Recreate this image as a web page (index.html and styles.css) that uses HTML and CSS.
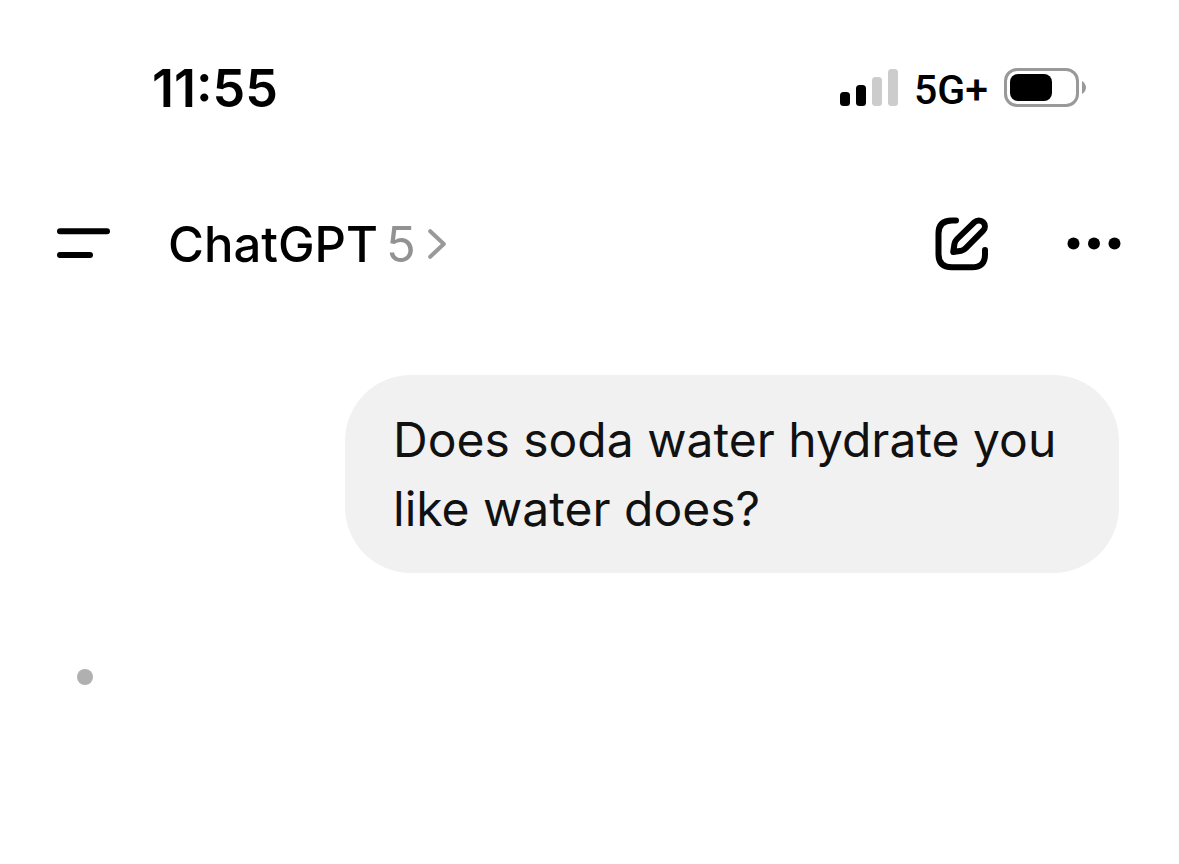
FILE: index.html
```html
<!DOCTYPE html>
<html lang="en">

<head>
    <meta charset="UTF-8">
    <meta name="viewport" content="width=device-width, initial-scale=1">
    <title>ChatGPT</title>
    <link rel="stylesheet" href="styles.css">
</head>

<body>
    <div class="status-bar">
        <span class="time">11:55</span>
        <div class="status-icons">
            <svg class="signal" width="58" height="40" viewBox="0 0 58 40" aria-hidden="true">
                <rect x="0" y="24" width="10" height="14" rx="3.5" />
                <rect x="16" y="17" width="10" height="21" rx="3.5" />
                <rect class="off" x="32" y="9" width="10" height="29" rx="3.5" />
                <rect class="off" x="48" y="1" width="10" height="37" rx="3.5" />
            </svg>
            <span class="network">5G+</span>
            <svg class="battery" width="83" height="40" viewBox="0 0 83 40" aria-hidden="true">
                <rect class="shell" x="1.5" y="1.5" width="72" height="36" rx="11.5" />
                <rect x="6" y="6" width="42" height="27" rx="8" />
                <path class="cap" d="M78 13C80.5 14.500 82 17 82 19.500S80.500 24.500 78 26Z" />
            </svg>
        </div>
    </div>

    <header class="header">
        <button class="icon-button" type="button" aria-label="Menu">
            <svg width="53" height="32" viewBox="0 0 53 32">
                <path class="line" d="M3 3.300H50M3 27H33" />
            </svg>
        </button>
        <button class="model" type="button">
            <span>ChatGPT</span>
            <span class="version">5</span>
            <svg width="18" height="30" viewBox="0 0 18 30" aria-hidden="true">
                <path class="chevron" d="M2.200 2.200L15.800 15L2.200 27.800" />
            </svg>
        </button>
        <div class="actions">
            <button class="icon-button" type="button" aria-label="New chat">
                <svg width="54" height="54" viewBox="0 0 54 54">
                    <path class="line" d="M21 3.500H17C8 3.500 3.500 7.700 3.500 16.500V37.200C3.500 46 8 50.200 17 50.200H37C45.800 50.200 50 46 50 37.200V33" />
                    <path class="line" d="M18.200 35L19.500 26.800C19.800 24.800 20.700 23.400 22.100 22L39.500 5.200C42 2.800 45.800 2.800 48.100 5.200C50.500 7.600 50.500 11.200 48.100 13.700L30.800 31.200C29.500 32.500 28.100 33.400 26.300 33.800Z" />
                </svg>
            </button>
            <button class="icon-button" type="button" aria-label="More">
                <svg width="54" height="14" viewBox="0 0 54 14">
                    <circle cx="6.500" cy="6.500" r="6" />
                    <circle cx="27" cy="6.500" r="6" />
                    <circle cx="47.500" cy="6.500" r="6" />
                </svg>
            </button>
        </div>
    </header>

    <main class="chat">
        <p class="bubble">Does soda water hydrate you like water does?</p>
        <div class="typing" role="status" aria-label="Typing"></div>
    </main>
</body>

</html>
```
FILE: styles.css
```css
* {
    box-sizing: border-box;
}

body {
    margin: 0;
    background-color: #fff;
    color: #000;
    font-family: Inter, "Liberation Sans", sans-serif;
    font-size: 48px;
}

svg {
    display: block;
}

button {
    display: flex;
    align-items: center;
    padding: 0;
    border: none;
    background: none;
    color: inherit;
    font: inherit;
    cursor: pointer;
}

.status-bar {
    display: flex;
    align-items: center;
    justify-content: space-between;
    height: 176px;
    padding: 0 92px 0 152px;
}

.time {
    font-size: 52px;
    font-weight: 600;
}

.status-icons {
    display: flex;
    align-items: center;
    gap: 16px;
}

.off {
    fill: #ccc;
}

.network {
    padding-top: 4px;
    font-family: Roboto, "Liberation Sans", sans-serif;
    font-size: 41px;
    font-weight: 500;
}

.shell {
    fill: none;
    stroke: #999;
    stroke-width: 3;
}

.cap {
    fill: #999;
}

.header {
    display: flex;
    align-items: center;
    height: 136px;
    padding: 0 58px 0 57px;
}

.line {
    fill: none;
    stroke: #000;
    stroke-width: 6;
    stroke-linecap: round;
    stroke-linejoin: round;
}

.model {
    gap: 8px;
    margin-left: 58px;
    font-size: 49px;
    font-weight: 500;
}

.version {
    margin-right: 4px;
    color: #929292;
    font-weight: 400;
}

.chevron {
    fill: none;
    stroke: #999;
    stroke-width: 4;
    stroke-linecap: round;
    stroke-linejoin: round;
}

.actions {
    display: flex;
    align-items: center;
    gap: 78px;
    margin-left: auto;
}

.chat {
    display: flex;
    flex-direction: column;
    gap: 96px;
    padding: 63px 60px 60px 77px;
}

.bubble {
    align-self: flex-end;
    width: 75%;
    max-width: 774px;
    margin: 0;
    padding: 30px 48px;
    border-radius: 66px;
    background-color: #f1f1f1;
    color: #111;
    line-height: 69px;
}

.typing {
    width: 16px;
    height: 16px;
    border-radius: 50%;
    background-color: #b0b0b0;
}
```
